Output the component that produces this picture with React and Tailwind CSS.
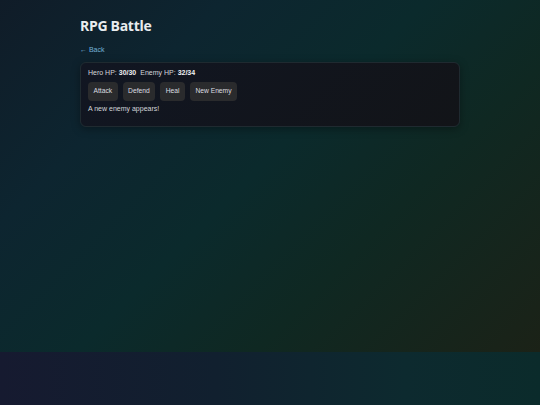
export default function App() {
  const buttons = ["Attack", "Defend", "Heal", "New Enemy"];
  return (
    <div className="w-full h-[405px] overflow-hidden font-['Liberation_Sans',Arial,sans-serif]">
      <div className="h-[352px] bg-[linear-gradient(135deg,#101c28_0%,#0d2530_25%,#0b2a2c_48%,#0f2822_68%,#1b2217_100%)] pl-[80px] pt-[15px]">
        <h1 className="font-['Open_Sans',sans-serif] font-bold text-[14px] tracking-[-0.3px] leading-[22px] text-[#e9ecef]">
          RPG Battle
        </h1>
        <div className="mt-[8px] text-[7px] leading-[10px] text-[#74b1d6]">← Back</div>
        <div className="mt-[7px] w-[380px] h-[65px] rounded-[6px] border border-[#1f2a30] bg-[linear-gradient(135deg,#111622,#121418)] shadow-[0_2px_8px_rgba(0,0,0,0.35)] px-[7px] pt-[5px]">
          <div className="text-[7px] leading-[10px] text-[#d3d6da]">
            Hero HP: <b className="text-[#eef0f2]">30/30</b>
            <span className="ml-[4px]">Enemy HP: </span>
            <b className="text-[#eef0f2]">32/34</b>
          </div>
          <div className="mt-[4px] flex gap-[5px]">
            {buttons.map((b) => (
              <div
                key={b}
                className="h-[19px] px-[5.5px] rounded-[4px] bg-[#2a2b2d] text-[6.7px] text-[#dcdee0] flex items-center"
              >
                {b}
              </div>
            ))}
          </div>
          <div className="mt-[3px] text-[7px] leading-[10px] text-[#d3d6da]">A new enemy appears!</div>
        </div>
      </div>
      <div className="h-[53px] bg-[linear-gradient(90deg,#161a30_0%,#11202f_40%,#0d2a2f_75%,#0b2b2b_100%)]"></div>
    </div>
  );
}
